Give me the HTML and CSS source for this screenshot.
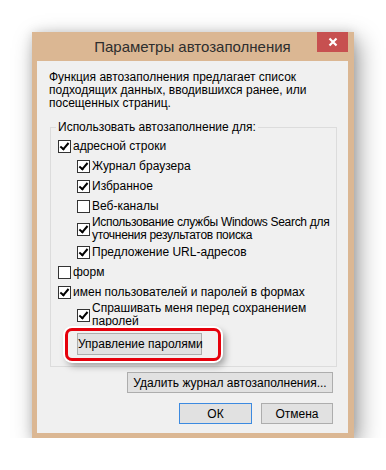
FILE: index.html
```html
<!DOCTYPE html>
<html lang="ru">
<head>
<meta charset="utf-8">
<title>Параметры автозаполнения</title>
<link rel="stylesheet" href="styles.css">
</head>
<body>
<div class="window">
  <div class="titlebar">Параметры автозаполнения</div>
  <div class="close">
    <svg width="10" height="10" viewBox="0 0 10 10"><path d="M1.5 1.5 L8.5 8.5 M8.5 1.5 L1.5 8.5" stroke="#fff" stroke-width="2.2" fill="none"/></svg>
  </div>
  <div class="content">
    <p class="desc">Функция автозаполнения предлагает список<br>подходящих данных, вводившихся ранее, или<br>посещенных страниц.</p>
    <fieldset class="group">
      <legend>Использовать автозаполнение для:</legend>
      <div class="row"><span class="cb on"></span><span class="lbl">адресной строки</span></div>
      <div class="row sub"><span class="cb on"></span><span class="lbl">Журнал браузера</span></div>
      <div class="row sub"><span class="cb on"></span><span class="lbl">Избранное</span></div>
      <div class="row sub"><span class="cb"></span><span class="lbl">Веб-каналы</span></div>
      <div class="row sub two"><span class="cb on"></span><span class="lbl tight">Использование службы Windows Search для<br>уточнения результатов поиска</span></div>
      <div class="row sub"><span class="cb on"></span><span class="lbl">Предложение URL-адресов</span></div>
      <div class="row"><span class="cb"></span><span class="lbl">форм</span></div>
      <div class="row"><span class="cb on"></span><span class="lbl">имен пользователей и паролей в формах</span></div>
      <div class="row sub two"><span class="cb on"></span><span class="lbl">Спрашивать меня перед сохранением<br>паролей</span></div>
      <div class="hl"><button class="btn manage">Управление паролями</button></div>
    </fieldset>
    <div class="actions">
      <button class="btn wide">Удалить журнал автозаполнения...</button>
    </div>
    <div class="actions footer">
      <button class="btn ok">ОК</button>
      <button class="btn cancel">Отмена</button>
    </div>
  </div>
</div>
</body>
</html>
```
FILE: styles.css
```css
body {
  margin: 0;
  background: #ffffff;
  font-family: "Segoe UI", "Liberation Sans", Arial, sans-serif;
  font-size: 12px;
  color: #000;
}

.window {
  position: relative;
  margin: 32px 0 0 32px;
  width: 322px;
  height: 406px;
  box-sizing: border-box;
  padding: 0 6px 5px 5px;
  background: #dbb793;
  display: flex;
  flex-direction: column;
  box-shadow: 5px 8px 22px rgba(0, 0, 0, 0.38), 0 0 10px rgba(0, 0, 0, 0.12);
}

.titlebar {
  height: 29px;
  display: flex;
  align-items: center;
  justify-content: center;
  font-size: 15px;
  color: #2e2e2e;
  padding-bottom: 1px;
  box-sizing: border-box;
}

.close {
  position: absolute;
  top: 0;
  right: 6px;
  width: 31px;
  height: 20px;
  background: #c75050;
  display: flex;
  align-items: center;
  justify-content: center;
}

.close svg {
  display: block;
}

.content {
  flex: 1;
  background: #f0f0f0;
  padding: 10px 11px 0 12px;
  display: flex;
  flex-direction: column;
}

.desc {
  margin: 0;
  line-height: 13px;
  white-space: nowrap;
}

.group {
  margin: 11px 0 0 1px;
  border: 1px solid #dcdcdc;
  padding: 2px 10px 5px 7px;
  min-width: 0;
  display: flex;
  flex-direction: column;
}

.group legend {
  line-height: 13px;
  padding: 0 2px;
  margin-left: -2px;
  white-space: nowrap;
}

.row {
  display: flex;
  align-items: center;
  height: 20px;
}

.row.two {
  height: 26px;
  line-height: 13px;
}

.row.sub {
  padding-left: 19px;
}

.lbl {
  white-space: nowrap;
}

.lbl.tight {
  letter-spacing: -0.3px;
}

.cb {
  flex: none;
  width: 13px;
  height: 13px;
  box-sizing: border-box;
  border: 1px solid #333;
  background: #fff;
  margin-right: 2px;
  position: relative;
}

.cb.on::after {
  content: "";
  position: absolute;
  left: 3px;
  top: 0px;
  width: 3px;
  height: 7px;
  border: solid #000;
  border-width: 0 2px 2px 0;
  transform: rotate(40deg);
}

.hl {
  align-self: flex-start;
  margin-left: 7px;
  border: 3px solid #e6000b;
  border-radius: 7px;
  padding: 2px 16px 3px 9px;
  box-shadow: 0 0 0 2px #ffffff, 3px 4px 7px 1px rgba(0, 0, 0, 0.35);
  display: flex;
}

.btn {
  font-family: "Segoe UI", "Liberation Sans", Arial, sans-serif;
  font-size: 12px;
  color: #000;
  background: #e1e1e1;
  border: 1px solid #adadad;
  margin: 0;
  padding: 0;
  height: 21px;
  box-sizing: border-box;
  white-space: nowrap;
  flex: none;
}

.btn.manage {
  width: 125px;
  height: 22px;
}

.actions {
  display: flex;
  justify-content: flex-end;
  gap: 9px;
  margin-top: 5px;
  padding-right: 4px;
}

.actions.footer {
  margin-top: 10px;
}

.btn.wide {
  width: 206px;
}

.btn.ok {
  width: 73px;
  border-color: #3c8ae0;
}

.btn.cancel {
  width: 72px;
}
```
